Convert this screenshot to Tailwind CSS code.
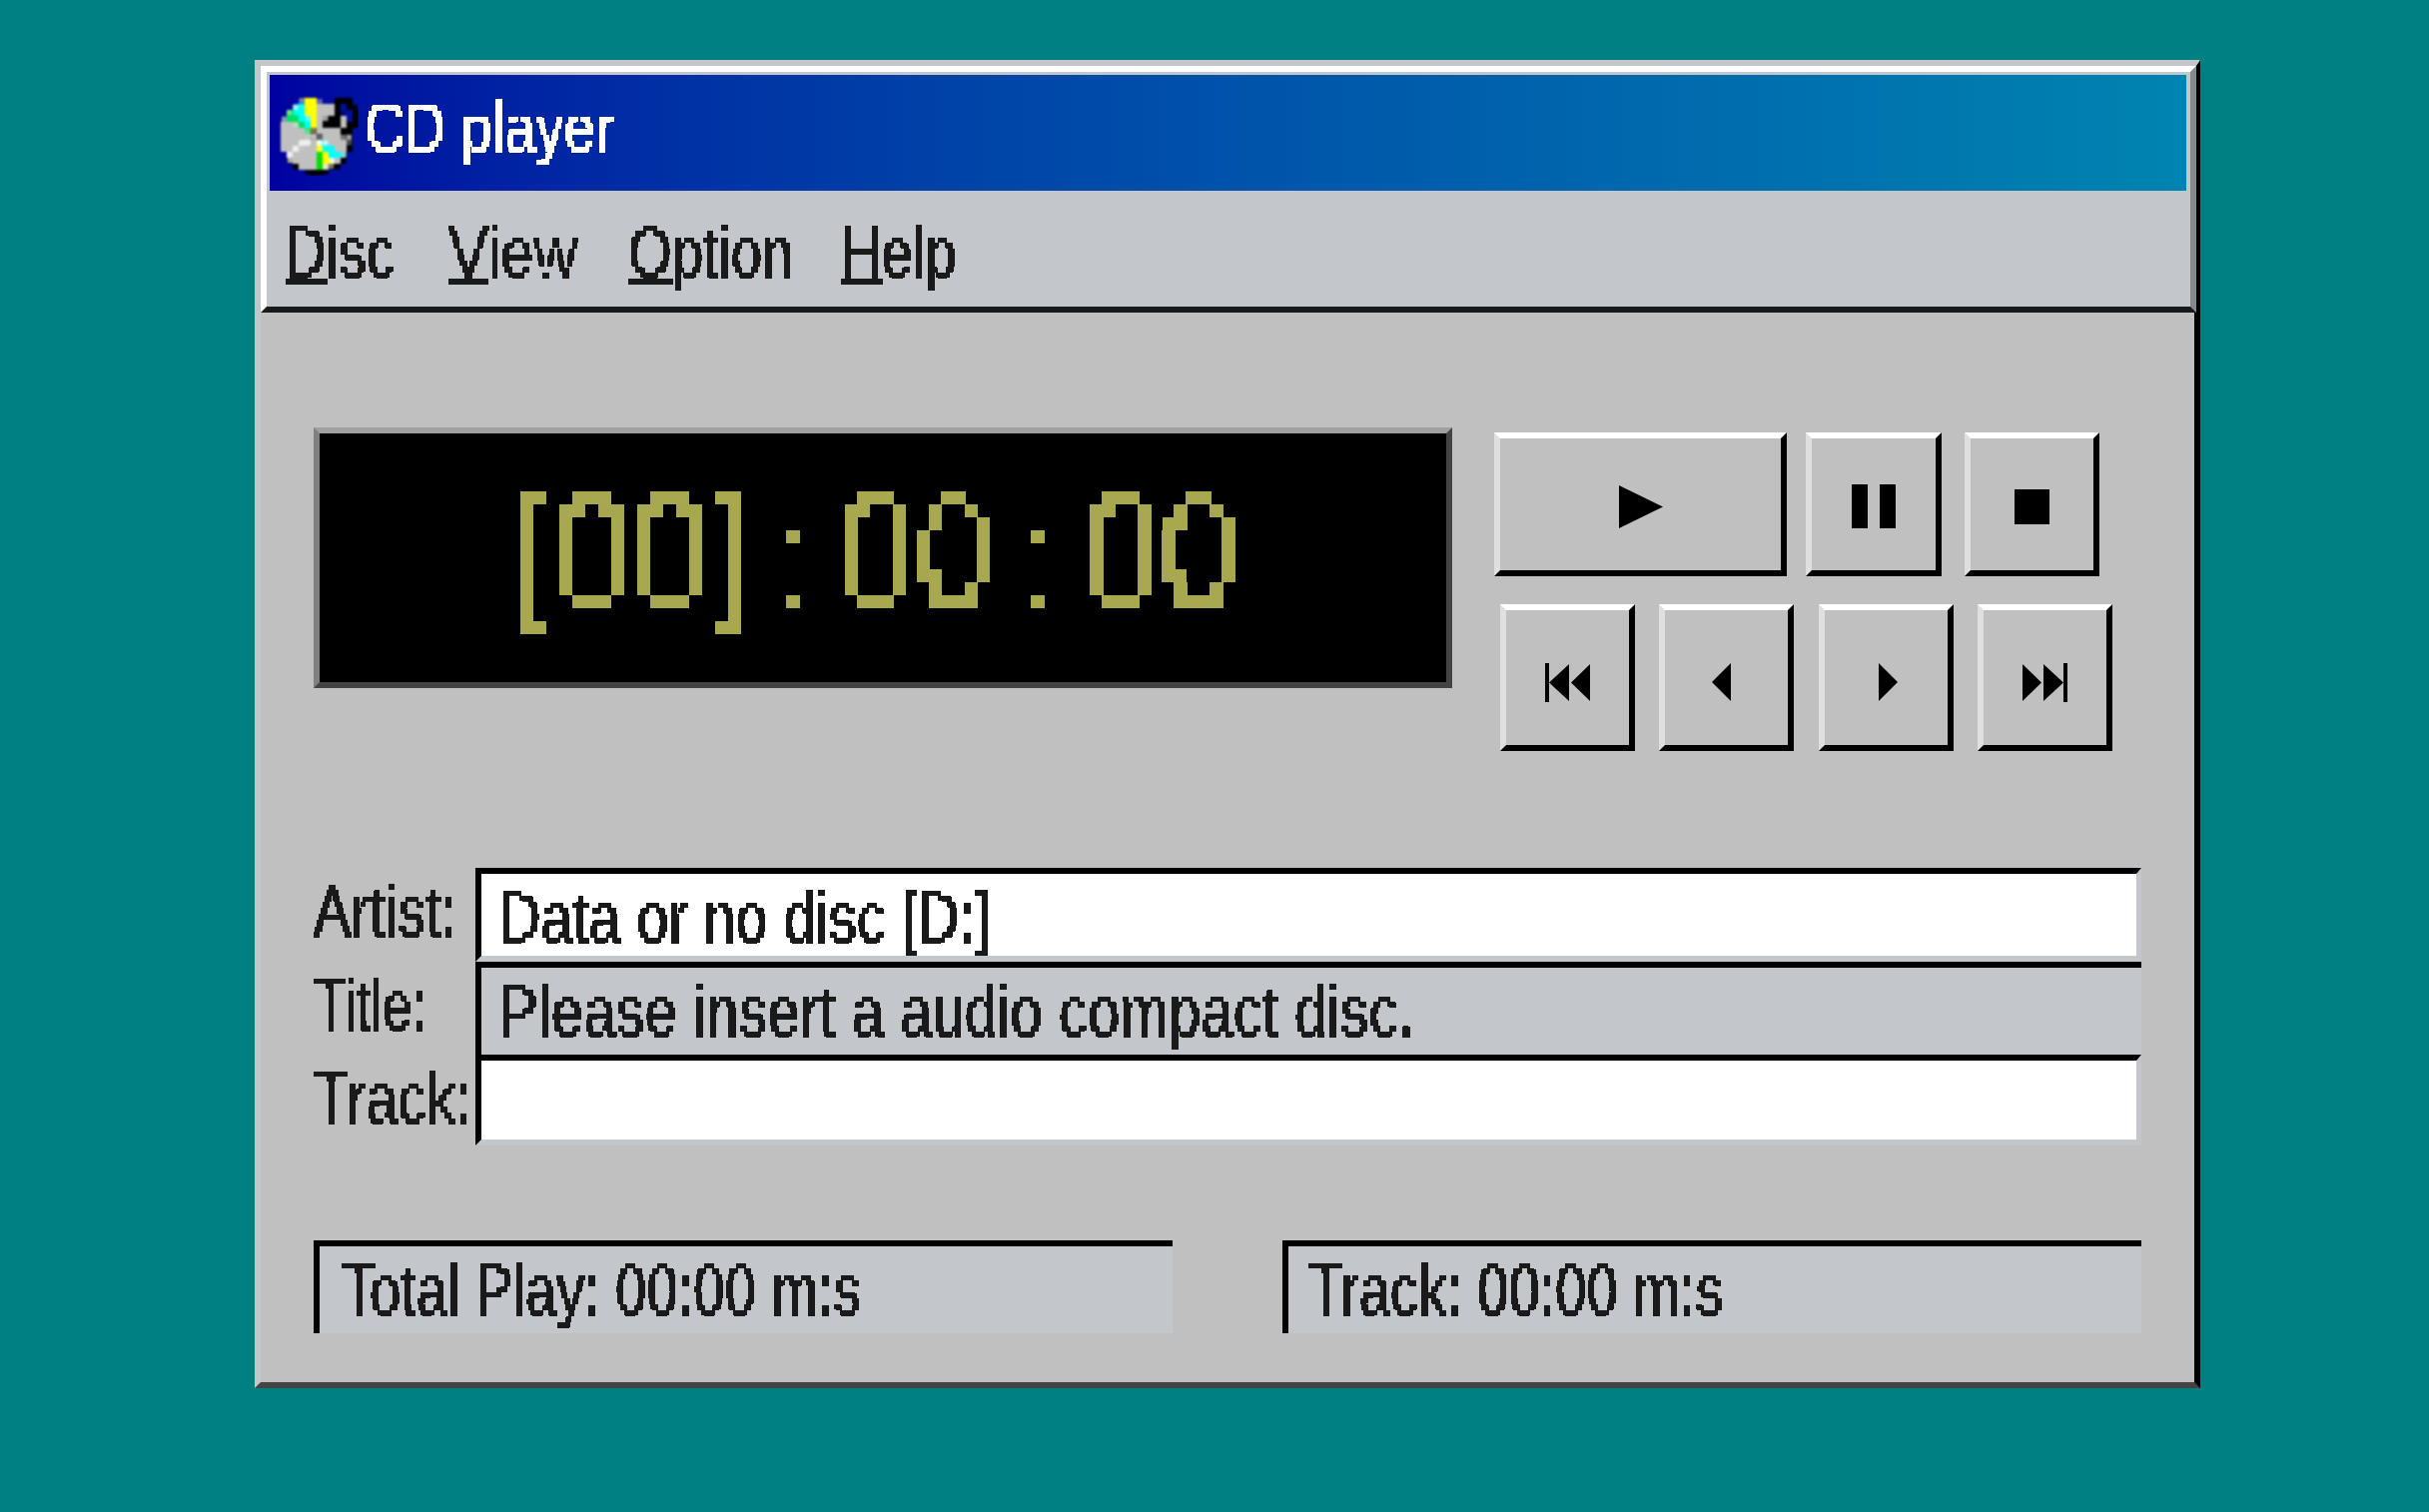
<!DOCTYPE html>
<html>
<head>
<meta charset="utf-8">
<script src="https://cdn.jsdelivr.net/npm/@tailwindcss/browser@4"></script>
<title>CD player</title>
</head>
<body class="bg-[#008080] font-['Liberation_Sans',Arial,sans-serif]">
<svg class="absolute w-0 h-0" aria-hidden="true">
  <filter id="px" x="0" y="0" width="120%" height="110%" color-interpolation-filters="sRGB">
    <feMorphology in="SourceGraphic" operator="erode" radius="1 0" result="thin"/>
    <feFlood x="2" y="2" width="2" height="2" flood-color="#000"/>
    <feComposite x="0" y="0" width="6" height="6"/>
    <feTile result="grid"/>
    <feComposite in="thin" in2="grid" operator="in"/>
    <feMorphology operator="dilate" radius="2"/>
    <feComponentTransfer><feFuncA type="discrete" tableValues="0 1"/></feComponentTransfer>
  </filter>
  <filter id="pxb" x="0" y="0" width="100%" height="100%" color-interpolation-filters="sRGB">
    <feFlood x="7" y="6" width="1" height="1" flood-color="#000"/>
    <feComposite x="0" y="0" width="15" height="13"/>
    <feTile result="grid"/>
    <feComposite in="SourceGraphic" in2="grid" operator="in"/>
    <feMorphology operator="dilate" radius="7 6"/>
    <feComponentTransfer x="0" y="39" width="400" height="143"><feFuncA type="discrete" tableValues="0 1"/></feComponentTransfer>
  </filter>
  <filter id="pxi" x="0" y="0" width="100%" height="100%" color-interpolation-filters="sRGB">
    <feFlood x="2" y="2" width="2" height="2" flood-color="#000"/>
    <feComposite x="0" y="0" width="6" height="6"/>
    <feTile result="grid"/>
    <feComposite in="SourceGraphic" in2="grid" operator="in"/>
    <feMorphology operator="dilate" radius="2"/>
    <feGaussianBlur stdDeviation="1.3"/>
  </filter>
</svg>
<div class="w-[2432px] h-[1514px] overflow-hidden pt-[60px] pl-[255px]">
  <div class="w-[1948px] h-[1330px] flex flex-col">
    <!-- Header -->
    <header class="h-[253px] border-t-[6px] border-l-[6px] border-r-[4px] border-t-[#c3c7cb] border-l-[#c3c7cb] border-r-black">
      <div class="h-[247px] border-t-[6px] border-l-[6px] border-r-[6px] border-b-[6px] border-t-white border-l-white border-r-[#85888c] border-b-[#1a1a1a] bg-[#c3c7cb] pt-[3px] pl-[3px] pr-[4px]">
        <div class="h-[116px] bg-linear-to-r from-[#0000a0] to-[#0084b0] flex items-start">
          <svg class="w-[84px] h-[84px] ml-[5px] mt-[17px] shrink-0 [filter:url(#pxi)]" viewBox="0 0 84 84">
            <circle cx="42" cy="46" r="36" fill="#000"/>
            <circle cx="40" cy="44" r="35" fill="#c0c0c0"/>
            <polygon points="40,44 27,7 40,7" fill="#ffff00"/>
            <polygon points="40,44 17,20 27,9" fill="#00ffff"/>
            <polygon points="40,44 10,26 18,17" fill="#00e060"/>
            <polygon points="40,44 69,63 58,70" fill="#00ffff"/>
            <polygon points="40,44 58,70 50,75" fill="#ffff00"/>
            <polygon points="40,44 50,75 41,78" fill="#00e000"/>
            <line x1="40" y1="44" x2="13" y2="63" stroke="#efefef" stroke-width="4"/>
            <circle cx="40" cy="44" r="6" fill="#404040"/>
            <circle cx="40" cy="44" r="2" fill="#c0c0c0"/>
            <path d="M62 7 L62 28 M62 8 L74 11 L79 18 L79 32 L74 40" fill="none" stroke="#000" stroke-width="6"/>
            <ellipse cx="57" cy="31" rx="9" ry="6" fill="#000"/>
            <ellipse cx="71" cy="41" rx="6" ry="5" fill="#000"/>
          </svg>
          <div class="ml-[6px] pt-[13px] text-[71px] leading-[80px] text-white whitespace-nowrap origin-left scale-x-[.79] [filter:url(#px)]">CD player</div>
        </div>
        <nav class="flex pl-[16px] pt-[22px] text-[71px] leading-[80px] text-[#1a1a1a] whitespace-nowrap">
          <div class="w-[163px] origin-left scale-x-[.79] [filter:url(#px)]"><span class="underline decoration-[6px] underline-offset-[3px] [text-decoration-skip-ink:none]">D</span>isc</div>
          <div class="w-[180px] origin-left scale-x-[.845] [filter:url(#px)]"><span class="underline decoration-[6px] underline-offset-[3px] [text-decoration-skip-ink:none]">V</span>iew</div>
          <div class="w-[213px] origin-left scale-x-[.79] [filter:url(#px)]"><span class="underline decoration-[6px] underline-offset-[3px] [text-decoration-skip-ink:none]">O</span>ption</div>
          <div class="w-[160px] origin-left scale-x-[.79] [filter:url(#px)]"><span class="underline decoration-[6px] underline-offset-[3px] [text-decoration-skip-ink:none]">H</span>elp</div>
        </nav>
      </div>
    </header>
    <!-- Body -->
    <main class="flex-1 border-l-[6px] border-r-[6px] border-b-[6px] border-l-[#c3c7cb] border-r-black border-b-[#444444] bg-[#c0c0c0] pl-[53px] pr-[53px] pt-[115px]">
      <section class="flex items-start">
        <div class="w-[1140px] h-[261px] border-t-[6px] border-l-[6px] border-r-[6px] border-b-[6px] border-t-[#a0a0a0] border-l-[#808080] border-r-[#444444] border-b-[#444444] bg-black pl-[201px] pt-[19px]">
          <div class="flex text-[163px] leading-[182px] text-[#a8a850] whitespace-nowrap origin-left scale-x-[.8667]">
            <div class="w-[270px] h-[182px] pt-[8px] [text-indent:-8px] [filter:url(#pxb)]"><span class="inline-block w-[45px] text-[146px] leading-none align-[6px] [text-indent:0]">[</span><span class="inline-block w-[90px] [text-indent:0]">0</span><span class="inline-block w-[90px] [text-indent:0]">0</span><span class="inline-block w-[45px] pl-[6px] text-[146px] leading-none align-[6px] [text-indent:0]">]</span></div>
            <div class="ml-[37px] w-[30px] h-[182px] pt-[8px] [text-indent:-15px] [filter:url(#pxb)]"><span class="text-[145px]">:</span></div>
            <div class="ml-[38px] w-[180px] h-[182px] pt-[8px] [text-indent:-8px] [filter:url(#pxb)]"><span class="inline-block w-[90px] [text-indent:0]">0</span><span class="inline-block w-[90px] [text-indent:0]">0</span></div>
            <div class="ml-[34.6px] w-[30px] h-[182px] pt-[8px] [text-indent:-15px] [filter:url(#pxb)]"><span class="text-[145px]">:</span></div>
            <div class="ml-[38.07px] w-[180px] h-[182px] pt-[8px] [text-indent:-8px] [filter:url(#pxb)]"><span class="inline-block w-[90px] [text-indent:0]">0</span><span class="inline-block w-[90px] [text-indent:0]">0</span></div>
          </div>
        </div>
        <div class="ml-[42px] pt-[5px]">
          <div class="flex">
            <button class="w-[293px] h-[144px] border-[6px] border-t-white border-l-[#dfdfdf] border-r-black border-b-black bg-[#c0c0c0] flex items-center justify-center">
              <svg class="w-[44px] h-[43px] mt-[4px]" viewBox="0 0 44 43"><polygon points="0,0 44,21.5 0,43" fill="#000"/></svg>
            </button>
            <button class="ml-[19px] w-[136px] h-[144px] border-[6px] border-t-white border-l-[#dfdfdf] border-r-black border-b-black bg-[#c0c0c0] flex items-center justify-center">
              <svg class="w-[44px] h-[44px] mt-[4px]" viewBox="0 0 44 44"><rect x="0" y="0" width="16" height="44" fill="#000"/><rect x="28" y="0" width="16" height="44" fill="#000"/></svg>
            </button>
            <button class="ml-[23px] w-[135px] h-[144px] border-[6px] border-t-white border-l-[#dfdfdf] border-r-black border-b-black bg-[#c0c0c0] flex items-center justify-center">
              <svg class="w-[35px] h-[35px] mt-[4px]" viewBox="0 0 35 35"><rect width="35" height="35" fill="#000"/></svg>
            </button>
          </div>
          <div class="flex mt-[28px] ml-[6px]">
            <button class="w-[135px] h-[147px] border-[6px] border-t-white border-l-[#dfdfdf] border-r-black border-b-black bg-[#c0c0c0] flex items-center justify-center">
              <svg class="w-[45px] h-[39px] mt-[10px]" viewBox="0 0 45 39"><rect width="4" height="39" fill="#000"/><polygon points="4,19.5 24,1 24,38" fill="#000"/><polygon points="26,19.5 45,1 45,38" fill="#000"/></svg>
            </button>
            <button class="ml-[24px] w-[135px] h-[147px] border-[6px] border-t-white border-l-[#dfdfdf] border-r-black border-b-black bg-[#c0c0c0] flex items-center justify-center">
              <svg class="w-[19px] h-[38px] mt-[9px] mr-[10px]" viewBox="0 0 19 38"><polygon points="0,19 19,0 19,38" fill="#000"/></svg>
            </button>
            <button class="ml-[25px] w-[135px] h-[147px] border-[6px] border-t-white border-l-[#dfdfdf] border-r-black border-b-black bg-[#c0c0c0] flex items-center justify-center">
              <svg class="w-[19px] h-[38px] mt-[9px] ml-[4px]" viewBox="0 0 19 38"><polygon points="0,0 19,19 0,38" fill="#000"/></svg>
            </button>
            <button class="ml-[24px] w-[135px] h-[147px] border-[6px] border-t-white border-l-[#dfdfdf] border-r-black border-b-black bg-[#c0c0c0] flex items-center justify-center">
              <svg class="w-[45px] h-[39px] mt-[10px]" viewBox="0 0 45 39"><polygon points="0,1 19,19.5 0,38" fill="#000"/><polygon points="21,1 41,19.5 21,38" fill="#000"/><rect x="41" width="4" height="39" fill="#000"/></svg>
            </button>
          </div>
        </div>
      </section>
      <section class="mt-[117px] text-[71px] leading-[80px] text-[#1a1a1a] whitespace-nowrap">
        <div class="flex h-[94px]">
          <div class="w-[162px] pt-[4px]"><div class="origin-left scale-x-[.79] [filter:url(#px)]">Artist:</div></div>
          <div class="flex-1 border-t-[6px] border-l-[6px] border-r-[5px] border-b-[6px] border-t-black border-l-black border-r-[#c3c7cb] border-b-[#c3c7cb] bg-white pl-[18px] pt-[4px]"><div class="origin-left scale-x-[.81] [filter:url(#px)]">Data or no disc [D:]</div></div>
        </div>
        <div class="flex h-[93px]">
          <div class="w-[162px] pt-[4px]"><div class="origin-left scale-x-[.75] [filter:url(#px)]">Title:</div></div>
          <div class="flex-1 border-t-[6px] border-l-[6px] border-t-black border-l-black bg-[#c3c7cb] pl-[18px] pt-[4px]"><div class="origin-left scale-x-[.82] [filter:url(#px)]">Please insert a audio compact disc.</div></div>
        </div>
        <div class="flex h-[91px]">
          <div class="w-[162px] pt-[4px]"><div class="origin-left scale-x-[.81] [filter:url(#px)]">Track:</div></div>
          <div class="flex-1 border-t-[6px] border-l-[6px] border-r-[5px] border-b-[6px] border-t-black border-l-black border-r-[#c3c7cb] border-b-[#c3c7cb] bg-white"></div>
        </div>
      </section>
      <section class="mt-[95px] flex justify-between text-[71px] leading-[80px] text-[#1a1a1a] whitespace-nowrap">
        <div class="w-[860px] h-[93px] border-t-[6px] border-l-[6px] border-t-black border-l-black bg-[#c3c7cb] pl-[22px] pt-[4px]"><div class="origin-left scale-x-[.79] [filter:url(#px)]">Total Play: 00:00 m:s</div></div>
        <div class="w-[860px] h-[93px] border-t-[6px] border-l-[6px] border-t-black border-l-black bg-[#c3c7cb] pl-[20px] pt-[4px]"><div class="origin-left scale-x-[.79] [filter:url(#px)]">Track: 00:00 m:s</div></div>
      </section>
    </main>
  </div>
</div>
</body>
</html>
